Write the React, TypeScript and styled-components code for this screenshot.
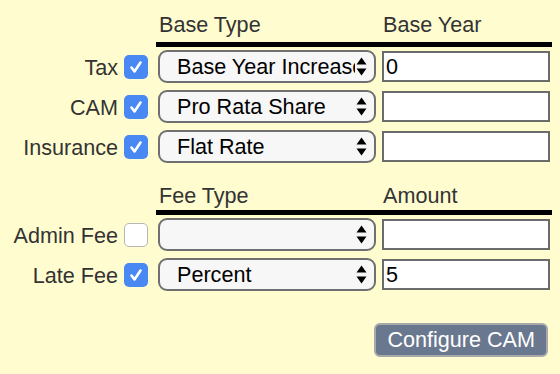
import React from 'react';
import styled, { createGlobalStyle } from 'styled-components';

const Global = createGlobalStyle`
  html, body { margin: 0; padding: 0; background: #fffdd0; }
  body { font-family: "Liberation Sans", Arial, Helvetica, sans-serif; }
`;

const Page = styled.div`
  width: 560px;
  height: 374px;
  box-sizing: border-box;
  padding-top: 13px;
  background: #fffdd0;
  color: #333;
  font-size: 21.6px;
  overflow: hidden;
`;

const HeaderRow = styled.div<{ $top: number }>`
  display: flex;
  padding-left: 158px;
  margin-top: ${(p) => p.$top}px;
  height: 24px;
  line-height: 24px;
`;

const HeaderCell = styled.div<{ $w?: number }>`
  width: ${(p) => (p.$w ? `${p.$w}px` : 'auto')};
  padding-left: ${(p) => (p.$w ? '1px' : '0')};
  color: #333;
`;

const Rule = styled.div<{ $top: number }>`
  margin-left: 156px;
  margin-top: ${(p) => p.$top}px;
  width: 396px;
  height: 5px;
  background: #000;
`;

const Rows = styled.div`
  display: flex;
  flex-direction: column;
  gap: 7px;
  margin-top: 3px;
`;

const Row = styled.div`
  display: flex;
  align-items: center;
  height: 33px;
`;

const Label = styled.div`
  width: 118px;
  text-align: right;
  color: #333;
  line-height: 24px;
  padding-top: 2px;
  white-space: nowrap;
`;

const Box = styled.span<{ $checked: boolean }>`
  display: inline-flex;
  align-items: center;
  justify-content: center;
  box-sizing: border-box;
  width: 24px;
  height: 24px;
  margin-left: 6px;
  margin-right: 10px;
  border-radius: 5px;
  background: ${(p) => (p.$checked ? '#4a89f3' : '#ffffff')};
  border: ${(p) => (p.$checked ? 'none' : '1.5px solid #b5b5b5')};
`;

const SelectWrap = styled.div`
  position: relative;
  width: 218px;
  height: 33px;
`;

const Select = styled.select`
  appearance: none;
  -webkit-appearance: none;
  box-sizing: border-box;
  width: 100%;
  height: 100%;
  margin: 0;
  padding: 0 19px 0 17px;
  border: 2px solid #707070;
  border-radius: 9px;
  background: #f7f7f7;
  color: #000;
  font-family: "Liberation Sans", Arial, Helvetica, sans-serif;
  font-size: 21.6px;
  outline: none;
`;

const Arrow = styled.svg`
  position: absolute;
  right: 9px;
  top: 7px;
  pointer-events: none;
`;

const Input = styled.input`
  box-sizing: border-box;
  width: 168px;
  height: 31px;
  margin: 0 0 0 6px;
  padding: 0 2px;
  border: 2px solid #6b6b6b;
  border-radius: 0;
  background: #fff;
  color: #000;
  font-family: "Liberation Sans", Arial, Helvetica, sans-serif;
  font-size: 21.6px;
  outline: none;
`;

const Footer = styled.div`
  display: flex;
  justify-content: flex-end;
  padding-right: 12px;
  margin-top: 32px;
`;

const Button = styled.button`
  box-sizing: border-box;
  height: 34px;
  padding: 0 11px;
  border: 2px solid #a9a9a9;
  border-radius: 6px;
  background: #6a788f;
  color: #fff;
  font-family: "Liberation Sans", Arial, Helvetica, sans-serif;
  font-size: 21.6px;
  line-height: 28px;
`;

const Check = ({ checked }: { checked: boolean }) => (
  <Box $checked={checked} role="checkbox" aria-checked={checked}>
    {checked && (
      <svg width="24" height="24" viewBox="0 0 24 24">
        <path d="M7.5 12.5 L10.5 16.5 L16.5 7.5" fill="none" stroke="#fff" strokeWidth="2.6" strokeLinecap="round" strokeLinejoin="round" />
      </svg>
    )}
  </Box>
);

const UpDown = () => (
  <Arrow width="11" height="19" viewBox="0 0 11 19">
    <path d="M5.5 0.5 L10.5 7.5 L0.5 7.5 Z" fill="#000" strokeLinejoin="round" />
    <path d="M0.5 11.5 L10.5 11.5 L5.5 18.5 Z" fill="#000" strokeLinejoin="round" />
  </Arrow>
);

type Item = { label: string; checked: boolean; type: string; options: string[]; value: string };

const Field = ({ item }: { item: Item }) => (
  <Row>
    <Label>{item.label}</Label>
    <Check checked={item.checked} />
    <SelectWrap>
      <Select defaultValue={item.type}>
        {item.options.map((o) => (
          <option key={o} value={o}>{o}</option>
        ))}
      </Select>
      <UpDown />
    </SelectWrap>
    <Input defaultValue={item.value} />
  </Row>
);

const baseOpts = ['Base Year Increase', 'Pro Rata Share', 'Flat Rate'];
const feeOpts = ['', 'Percent', 'Flat'];

const bases: Item[] = [
  { label: 'Tax', checked: true, type: 'Base Year Increase', options: baseOpts, value: '0' },
  { label: 'CAM', checked: true, type: 'Pro Rata Share', options: baseOpts, value: '' },
  { label: 'Insurance', checked: true, type: 'Flat Rate', options: baseOpts, value: '' },
];

const fees: Item[] = [
  { label: 'Admin Fee', checked: false, type: '', options: feeOpts, value: '' },
  { label: 'Late Fee', checked: true, type: 'Percent', options: feeOpts, value: '5' },
];

export default function App() {
  return (
    <Page>
      <Global />
      <HeaderRow $top={0}>
        <HeaderCell $w={224}>Base Type</HeaderCell>
        <HeaderCell>Base Year</HeaderCell>
      </HeaderRow>
      <Rule $top={5} />
      <Rows>
        {bases.map((b) => (
          <Field key={b.label} item={b} />
        ))}
      </Rows>
      <HeaderRow $top={21}>
        <HeaderCell $w={224}>Fee Type</HeaderCell>
        <HeaderCell>Amount</HeaderCell>
      </HeaderRow>
      <Rule $top={2} />
      <Rows>
        {fees.map((f) => (
          <Field key={f.label} item={f} />
        ))}
      </Rows>
      <Footer>
        <Button>Configure CAM</Button>
      </Footer>
    </Page>
  );
}
